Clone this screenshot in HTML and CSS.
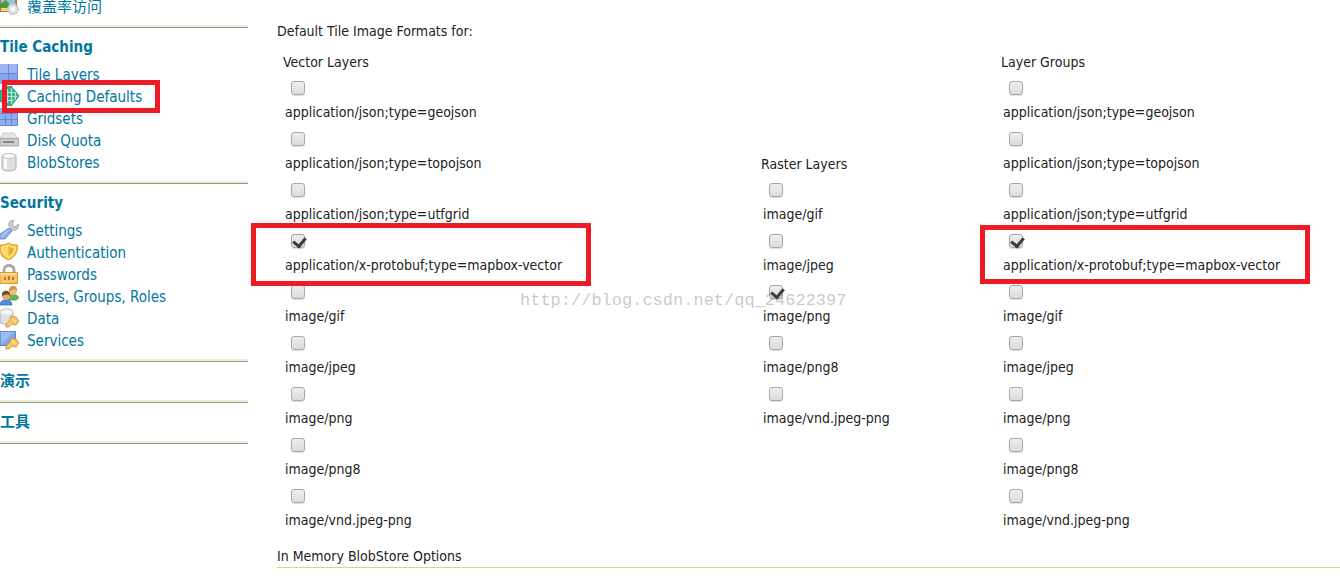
FILE: index.html
```html
<!DOCTYPE html>
<html lang="zh-CN">
<head>
<meta charset="utf-8">
<title>Caching Defaults</title>
<link rel="stylesheet" href="styles.css">
</head>
<body>
<div class="page">
  <nav class="sidebar">
    <section class="group">
      <ul class="links">
        <li><a href="#"><svg class="icon" viewBox="0 0 19 20"><path fill="#b57a2c" d="M0 1h17v15H0z"/><path fill="#8fc3ee" d="M1 3h14v8H1z"/><path fill="#4f9a3c" d="M0 8l6-4 7 8H0z"/><path fill="#f1d77a" d="M1 12h8v3H1z"/><circle cx="13" cy="13" r="5" fill="#e3e5e8" stroke="#c0c4c8" stroke-width="2" stroke-dasharray="2 1"/><circle cx="13" cy="13" r="2" fill="#fff"/></svg>覆盖率访问</a></li>
      </ul>
    </section>
    <section class="group">
      <h2 class="heading">Tile Caching</h2>
      <ul class="links">
        <li><a href="#"><svg class="icon" viewBox="0 0 19 20"><path fill="#86a5e6" d="M0 0h18v20H0z"/><path fill="#9ab5ef" d="M0 0h8v9H0zM9 0h8v9H9z"/><path stroke="#6388d8" d="M8.500 0v20M0 9.500h18M17.500 0v20"/></svg>Tile Layers</a></li>
        <li><a href="#"><svg class="icon" viewBox="0 0 19 20"><path fill="#36b59a" stroke="#1c9482" d="M0 5l9-5h2l8 10-8 10H9l-9-5z"/><path fill="none" stroke="#b5e8cc" stroke-width="1" d="M7.500 3v14M11.500 2v16M15.500 6v8M2 6.500h13M2 10.500h15M3 14.500h11"/></svg>Caching Defaults</a><span class="frame frame-nav"></span></li>
        <li><a href="#"><svg class="icon" viewBox="0 0 19 20"><path fill="#8faeec" d="M0 0h18v18H0z"/><path fill="none" stroke="#6388d8" d="M5.500 0v18M11.500 0v18M17.500 0v18M0 5.500h18M0 11.500h18M0 17.500h18"/></svg>Gridsets</a></li>
        <li><a href="#"><svg class="icon" viewBox="0 0 19 20"><path fill="#e6e6e6" stroke="#bbb" stroke-width=".7" d="M3 3h11l4 6H0z"/><path fill="#cdcdcd" stroke="#999" stroke-width=".8" d="M0 8.500h18.500v7.500H0z"/><path fill="#888" d="M3 11h11v2H3z"/></svg>Disk Quota</a></li>
        <li><a href="#"><svg class="icon" viewBox="0 0 19 20"><path fill="#dedede" stroke="#b0b0b0" d="M2 4c0-3 14-3 14 0v12c0 4-14 4-14 0z"/><path fill="#fafafa" d="M4 7h3v10H4z"/><ellipse cx="9" cy="4" rx="6.500" ry="2.500" fill="#f7f7f7" stroke="#bbb" stroke-width=".8"/></svg>BlobStores</a></li>
      </ul>
    </section>
    <section class="group">
      <h2 class="heading">Security</h2>
      <ul class="links">
        <li><a href="#"><svg class="icon" viewBox="0 0 19 20"><path fill="#cfcfcf" stroke="#999" stroke-width=".8" d="M14 0c-4 0-6 3-5 6l3 4c4 1 7-1 6.500-6L15 7l-3-2z"/><path fill="#8db0ea" stroke="#5e83c8" stroke-width=".8" d="M0 14l9-6 3 3-7 8H0z"/><path stroke="#c5daf9" d="M1 17l8-7"/></svg>Settings</a></li>
        <li><a href="#"><svg class="icon" viewBox="0 0 19 20"><path fill="#f3b936" stroke="#d99a25" stroke-width=".8" d="M0 3c4 0 6-1 8.500-2C11 2 14 3 17.500 3c0 8-2 12-9 15C3 16 0 13 0 7z"/><path fill="#fbd96e" stroke="#fff0b5" d="M1.500 5c3 0 5-1 7-2 2 1 4 2 7 2 0 5-2 8-7 11-5-3-7-6-7-11z"/><path fill="#edad2a" d="M8.500 4c2 1 3 2 5 2 0 4-2 6-5 8z"/></svg>Authentication</a></li>
        <li><a href="#"><svg class="icon" viewBox="0 0 19 20"><path fill="none" stroke="#aaa" stroke-width="3" d="M4 9V6c0-6 10-6 10 0v3"/><path fill="#f7c665" stroke="#d99832" d="M0 8.500h17.500v11H0z"/><path stroke="#fff0c0" d="M0 10h17"/><path fill="#b97727" d="M4 13h2v3H4zM8 12h2v4H8zM12 13h2v3h-2z"/></svg>Passwords</a></li>
        <li><a href="#"><svg class="icon" viewBox="0 0 19 20"><path fill="#68b354" stroke="#3e8a35" stroke-width=".7" d="M7 13c0-6 11-6 11.500-1l-2 2H8z"/><circle cx="13" cy="5" r="4" fill="#f0bd88"/><path fill="#d59231" d="M9 6c-1-8 9-8 8-1l-2-2-4 1z"/><path fill="#4d8ee0" stroke="#3069b5" stroke-width=".7" d="M0 19c0-7 12-7 12 0z"/><circle cx="6" cy="10" r="4" fill="#e9a371"/><path fill="#70472f" d="M2 10c-1-7 9-7 8 0L8 8 4 9z"/></svg>Users, Groups, Roles</a></li>
        <li><a href="#"><svg class="icon" viewBox="0 0 19 20"><path fill="#e0e0e0" stroke="#aaa" stroke-width=".8" d="M0 4c0-4 13-4 13 0v10c0 3-13 3-13 0z"/><ellipse cx="6.500" cy="4" rx="6" ry="2.500" fill="#f8f8f8"/><path fill="#f5c765" stroke="#c78b25" stroke-width=".8" d="M11 8l5 1 3 4-3 4-4-1-3 3H6v-3l4-4z"/><path stroke="#fff2c7" d="M12 11l4 3"/></svg>Data</a></li>
        <li><a href="#"><svg class="icon" viewBox="0 0 19 20"><path fill="#7fa8e6" stroke="#5c86c8" d="M0 1.500h15.500v14H0z"/><path fill="#9bbdf0" d="M1 2l13 0-13 12z"/><path fill="#f5c765" stroke="#c78b25" stroke-width=".8" d="M11 8l5 1 3 4-3 4-4-1-3 3H6v-3l4-4z"/><path stroke="#fff2c7" d="M12 11l4 3"/></svg>Services</a></li>
      </ul>
    </section>
    <section class="group group-single"><h2 class="heading"><a href="#">演示</a></h2></section>
    <section class="group group-single"><h2 class="heading"><a href="#">工具</a></h2></section>
  </nav>

  <main class="main">
    <p class="intro">Default Tile Image Formats for:</p>
    <div class="formats">
      <section class="column">
        <h3 class="title">Vector Layers</h3>
        <ul class="options">
          <li class="option"><input type="checkbox" id="v1"><label for="v1">application/json;type=geojson</label></li>
          <li class="option"><input type="checkbox" id="v2"><label for="v2">application/json;type=topojson</label></li>
          <li class="option"><input type="checkbox" id="v3"><label for="v3">application/json;type=utfgrid</label></li>
          <li class="option"><input type="checkbox" id="v4" checked><label for="v4">application/x-protobuf;type=mapbox-vector</label><span class="frame frame-vector"></span></li>
          <li class="option"><input type="checkbox" id="v5"><label for="v5">image/gif</label></li>
          <li class="option"><input type="checkbox" id="v6"><label for="v6">image/jpeg</label></li>
          <li class="option"><input type="checkbox" id="v7"><label for="v7">image/png</label></li>
          <li class="option"><input type="checkbox" id="v8"><label for="v8">image/png8</label></li>
          <li class="option"><input type="checkbox" id="v9"><label for="v9">image/vnd.jpeg-png</label></li>
        </ul>
      </section>
      <section class="column">
        <h3 class="title">Raster Layers</h3>
        <ul class="options">
          <li class="option"><input type="checkbox" id="r1"><label for="r1">image/gif</label></li>
          <li class="option"><input type="checkbox" id="r2"><label for="r2">image/jpeg</label></li>
          <li class="option"><input type="checkbox" id="r3" checked><label for="r3">image/png</label></li>
          <li class="option"><input type="checkbox" id="r4"><label for="r4">image/png8</label></li>
          <li class="option"><input type="checkbox" id="r5"><label for="r5">image/vnd.jpeg-png</label></li>
        </ul>
      </section>
      <section class="column">
        <h3 class="title">Layer Groups</h3>
        <ul class="options">
          <li class="option"><input type="checkbox" id="g1"><label for="g1">application/json;type=geojson</label></li>
          <li class="option"><input type="checkbox" id="g2"><label for="g2">application/json;type=topojson</label></li>
          <li class="option"><input type="checkbox" id="g3"><label for="g3">application/json;type=utfgrid</label></li>
          <li class="option"><input type="checkbox" id="g4" checked><label for="g4">application/x-protobuf;type=mapbox-vector</label><span class="frame frame-group"></span></li>
          <li class="option"><input type="checkbox" id="g5"><label for="g5">image/gif</label></li>
          <li class="option"><input type="checkbox" id="g6"><label for="g6">image/jpeg</label></li>
          <li class="option"><input type="checkbox" id="g7"><label for="g7">image/png</label></li>
          <li class="option"><input type="checkbox" id="g8"><label for="g8">image/png8</label></li>
          <li class="option"><input type="checkbox" id="g9"><label for="g9">image/vnd.jpeg-png</label></li>
        </ul>
      </section>
      <span class="watermark">http://blog.csdn.net/qq_24622397</span>
    </div>
    <h2 class="subhead">In Memory BlobStore Options</h2>
  </main>
</div>
</body>
</html>
```

FILE: styles.css
```css
* { box-sizing: border-box; }

body {
  margin: 0;
  background: #fff;
  color: #222;
  font: 14px/20px "DejaVu Sans Condensed", "Noto Sans CJK SC", sans-serif;
}

h2, h3, p, ul { margin: 0; padding: 0; }
ul { list-style: none; }

.page {
  display: flex;
  gap: 29px;
  min-height: 100vh;
  overflow: hidden;
}

/* Navigation */
.sidebar {
  flex: 0 0 248px;
  margin-top: -5px;
  color: #0076a1;
  font-size: 15px;
}
.sidebar a { color: inherit; text-decoration: none; }

.group {
  padding-bottom: 10px;
  border-bottom: 1px solid #8f9a80;
  box-shadow: inset 0 -2px #e8f2da;
}
.group-single { padding-bottom: 5px; }
.heading {
  height: 35px;
  font-size: 15px;
  font-weight: 700;
  line-height: 38px;
}

.links li { position: relative; }
.links a {
  display: flex;
  gap: 8px;
  height: 22px;
  line-height: 24px;
}
.icon { flex: none; width: 19px; height: 20px; margin-top: 1px; }

/* Formats */
.main { flex: 1; min-width: 0; padding-top: 21px; }

.formats {
  position: relative;
  display: grid;
  grid-template-columns: 478fr 240fr 339fr;
  align-items: center;
  padding: 11px 0 0 6px;
}
.title { font-size: 14px; font-weight: 400; }

.option {
  position: relative;
  display: flex;
  flex-direction: column;
  align-items: flex-start;
  gap: 7px;
  height: 51px;
  padding: 9px 0 0 2px;
}
.option input {
  appearance: none;
  width: 14px;
  height: 14px;
  margin: 0 0 0 6px;
  border: 1px solid #a8a8a8;
  border-radius: 3px;
  background: linear-gradient(#eee, #dcdcdc);
  box-shadow: 0 1px 1px #ddd;
}
.option input:checked::after {
  content: "";
  display: block;
  width: 6px;
  height: 9px;
  margin: 0 0 0 3px;
  border: solid #3c3c3c;
  border-width: 0 3px 3px 0;
  transform: rotate(40deg);
}

.subhead {
  margin-top: 15px;
  padding-bottom: 1px;
  border-bottom: 1px solid #c3de94;
  font-size: 14px;
  font-weight: 400;
}

/* Annotations */
.frame {
  position: absolute;
  z-index: 1;
  border: 5px solid #ed1c24;
  pointer-events: none;
}
.frame-nav { left: 2px; top: -5px; width: 158px; height: 33px; }
.frame-vector { left: -32px; top: -2px; width: 340px; height: 63px; }
.frame-group { left: -21px; top: 0; width: 330px; height: 59px; }

.watermark {
  position: absolute;
  left: 243px;
  top: 250px;
  color: rgba(150, 150, 140, .5);
  font: 17px/20px "Liberation Mono", monospace;
  pointer-events: none;
}
```
